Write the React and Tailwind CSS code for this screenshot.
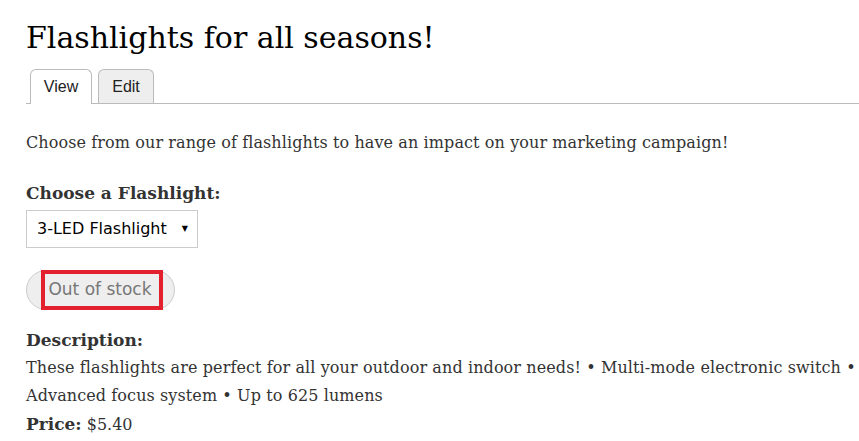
import React from 'react';

const serif = { fontFamily: '"DejaVu Serif", Georgia, serif' };

export default function App() {
    return (
        <div className="min-h-screen bg-white pl-[26px] text-[#333]" style={serif}>
            {/* TITLE */}
            <h1 className="pt-[16px] text-[30px] leading-[44px] text-black">Flashlights for all seasons!</h1>

            {/* TABS */}
            <div className="mt-[9px] flex gap-[6px] border-b border-[#bbb] pl-[4px] font-['Liberation_Sans',Arial,sans-serif] text-[16px] text-[#222]">
                <div className="-mb-px flex h-[35px] w-[62px] items-center justify-center rounded-t-[6px] border border-b-0 border-[#bbb] bg-white">View</div>
                <div className="flex h-[34px] w-[56px] items-center justify-center rounded-t-[6px] border border-b-0 border-[#bbb] bg-[#eee]">Edit</div>
            </div>

            {/* BODY */}
            <p className="mt-[25px] text-[16px] leading-[28px] tracking-[0.1px]">Choose from our range of flashlights to have an impact on your marketing campaign!</p>

            <div className="mt-[22px] text-[17px] font-bold leading-[28px]">Choose a Flashlight:</div>
            <div className="mt-[3px] flex h-[38px] w-[172px] items-center justify-between border border-[#ccc] bg-white pl-[10px] pr-[9px] font-['DejaVu_Sans',Verdana,sans-serif] text-[16px] text-black">
                <span>3-LED Flashlight</span>
                <span className="text-[8px]">▼</span>
            </div>

            <div className="relative mt-[22px] flex h-[40px] w-[149px] items-center justify-center rounded-full border border-[#ccc] bg-[#eee] font-['DejaVu_Sans',Verdana,sans-serif] text-[17px] text-[#777]">
                <span className="pr-[1px]">Out of stock</span>
                <div className="absolute left-[14px] top-[-1px] h-[40px] w-[122px] border-[4px] border-[#e3202e]" />
            </div>

            <div className="mt-[16px] leading-[28px]">
                <div className="text-[17px] font-bold">Description:</div>
                <p className="text-[16px] tracking-[0.1px]">These flashlights are perfect for all your outdoor and indoor needs! • Multi-mode electronic switch • Advanced focus system • Up to 625 lumens</p>
                <p className="text-[16px]"><span className="text-[17px] font-bold">Price:</span> $5.40</p>
            </div>
        </div>
    );
}
